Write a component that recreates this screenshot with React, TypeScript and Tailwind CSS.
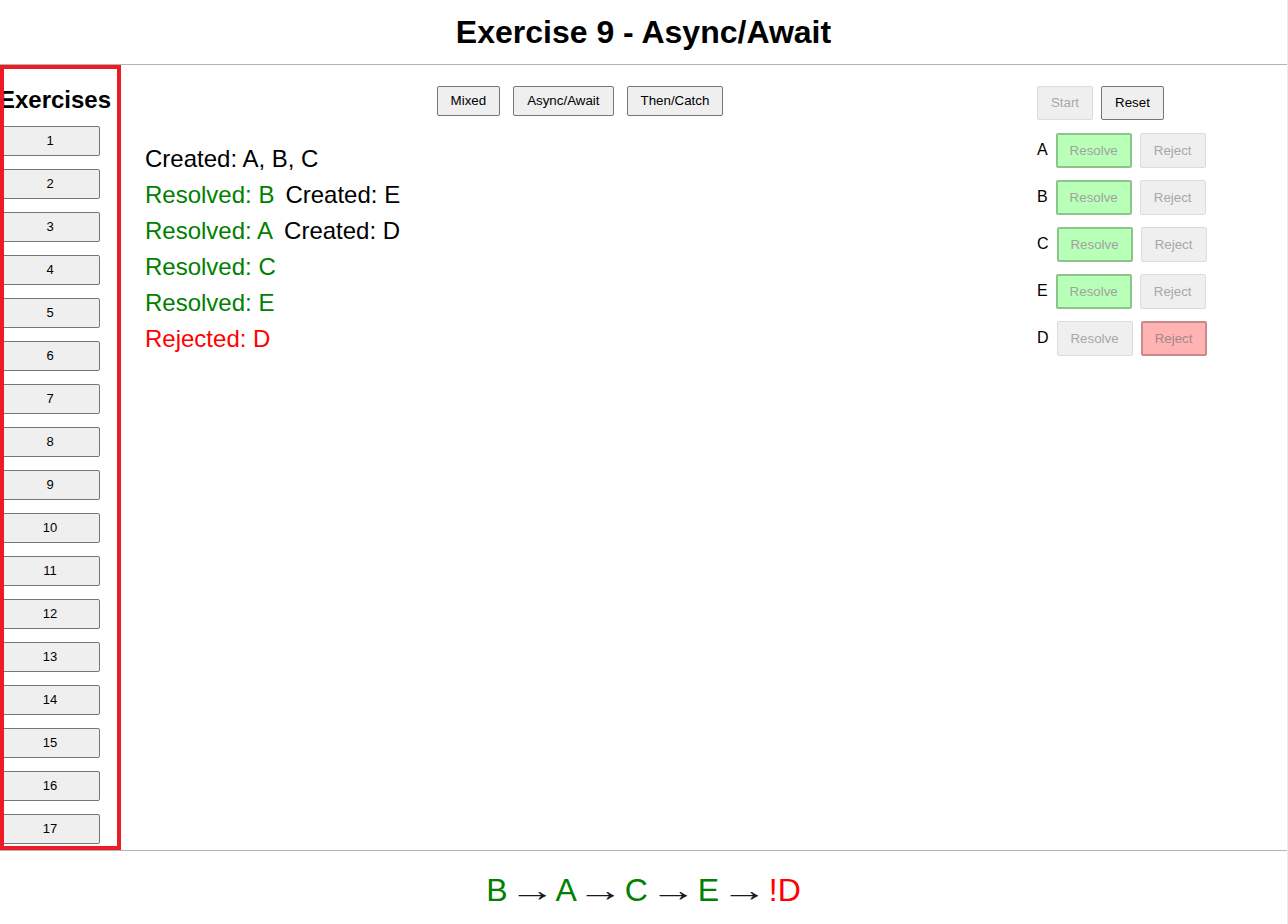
import React from "react";

const exercises = Array.from({ length: 17 }, (_, i) => i + 1);

const log: { text: string; color: string }[][] = [
  [{ text: "Created: A, B, C", color: "text-black" }],
  [
    { text: "Resolved: B", color: "text-[#008000]" },
    { text: "Created: E", color: "text-black" },
  ],
  [
    { text: "Resolved: A", color: "text-[#008000]" },
    { text: "Created: D", color: "text-black" },
  ],
  [{ text: "Resolved: C", color: "text-[#008000]" }],
  [{ text: "Resolved: E", color: "text-[#008000]" }],
  [{ text: "Rejected: D", color: "text-[#ff0000]" }],
];

const promises = [
  { name: "A", state: "resolved" },
  { name: "B", state: "resolved" },
  { name: "C", state: "resolved" },
  { name: "E", state: "resolved" },
  { name: "D", state: "rejected" },
];

const order = [
  { text: "B", color: "text-[#008000]" },
  { text: "A", color: "text-[#008000]" },
  { text: "C", color: "text-[#008000]" },
  { text: "E", color: "text-[#008000]" },
  { text: "!D", color: "text-[#ff0000]" },
];

const greenBtn = "bg-[#b8ffb8] border-2 border-[#8cc48c] text-[#a2a2a2]";
const redBtn = "bg-[#ffb3b3] border-2 border-[#c88a8a] text-[#a08a8a]";
const offBtn = "bg-[#efefef] border border-[#dcdcdc] text-[#a8a8a8]";

export default function App() {
  return (
    <div className="w-[1288px] h-[924px] flex flex-col bg-white text-black font-['Liberation_Sans',Arial,sans-serif] border-r border-[#ececec]">
      {/* Title */}
      <header className="h-[65px] shrink-0 flex items-center justify-center border-b border-[#b4b4b4]">
        <h1 className="text-[32px] font-bold leading-none">Exercise 9 - Async/Await</h1>
      </header>

      <div className="flex h-[785px] shrink-0">
        {/* Sidebar */}
        <aside className="w-[121px] shrink-0 h-full overflow-hidden flex flex-col items-center pr-[21px] pt-[21px] outline-solid outline-4 -outline-offset-4 outline-[#ed1c24]">
          <h2 className="text-[24px] font-bold whitespace-nowrap leading-[27px] mb-[13px] ml-[10px]">Exercises</h2>
          <div className="flex flex-col gap-[13px]">
            {exercises.map((n) => (
              <button
                key={n}
                className="w-[100px] h-[30px] bg-[#efefef] border border-[#767676] rounded-[2px] text-[13px] text-black"
              >
                {n}
              </button>
            ))}
          </div>
        </aside>

        {/* Main log */}
        <main className="flex-1 flex flex-col pt-[21px]">
          <div className="flex justify-center gap-[13px] pl-[2px]">
            {["Mixed", "Async/Await", "Then/Catch"].map((m) => (
              <button
                key={m}
                className="h-[30px] px-[13px] bg-[#efefef] border border-[#767676] rounded-[2px] text-[13.33px] text-black"
              >
                {m}
              </button>
            ))}
          </div>
          <div className="mt-[25px] pl-6 text-[24px] leading-[36px]">
            {log.map((line, i) => (
              <div key={i} className="flex gap-[11px]">
                {line.map((s, j) => (
                  <span key={j} className={s.color}>
                    {s.text}
                  </span>
                ))}
              </div>
            ))}
          </div>
        </main>

        {/* Controls */}
        <section className="w-[250px] shrink-0 pt-[21px]">
          <div className="flex gap-2">
            <button className="h-[34px] w-[56px] bg-[#efefef] border border-[#dcdcdc] rounded-[2px] text-[13.33px] text-[#a8a8a8]">
              Start
            </button>
            <button className="h-[34px] w-[63px] bg-[#efefef] border border-[#767676] rounded-[2px] text-[13.33px] text-black">
              Reset
            </button>
          </div>
          <div className="mt-[13px] flex flex-col gap-[12px]">
            {promises.map((p) => (
              <div key={p.name} className="flex items-center gap-2 h-[35px]">
                <span className="text-[16px] -mt-[2px]">{p.name}</span>
                <button
                  className={`h-[35px] w-[76px] rounded-[2px] text-[13.33px] ${
                    p.state === "resolved" ? greenBtn : offBtn
                  }`}
                >
                  Resolve
                </button>
                <button
                  className={`h-[35px] w-[66px] rounded-[2px] text-[13.33px] ${
                    p.state === "rejected" ? redBtn : offBtn
                  }`}
                >
                  Reject
                </button>
              </div>
            ))}
          </div>
        </section>
      </div>

      {/* Order summary */}
      <footer className="flex-1 border-t border-[#b4b4b4] flex justify-center pt-[21px]">
        <div className="text-[32px] leading-[37px] whitespace-pre">
          {order.map((o, i) => (
            <React.Fragment key={o.text}>
              {i > 0 && (
                <>
                  <span> </span>
                  <span className="inline-block scale-x-[1.45] text-[#1a1a1a]">→</span>
                  <span> </span>
                </>
              )}
              <span className={o.color}>{o.text}</span>
            </React.Fragment>
          ))}
        </div>
      </footer>
    </div>
  );
}
